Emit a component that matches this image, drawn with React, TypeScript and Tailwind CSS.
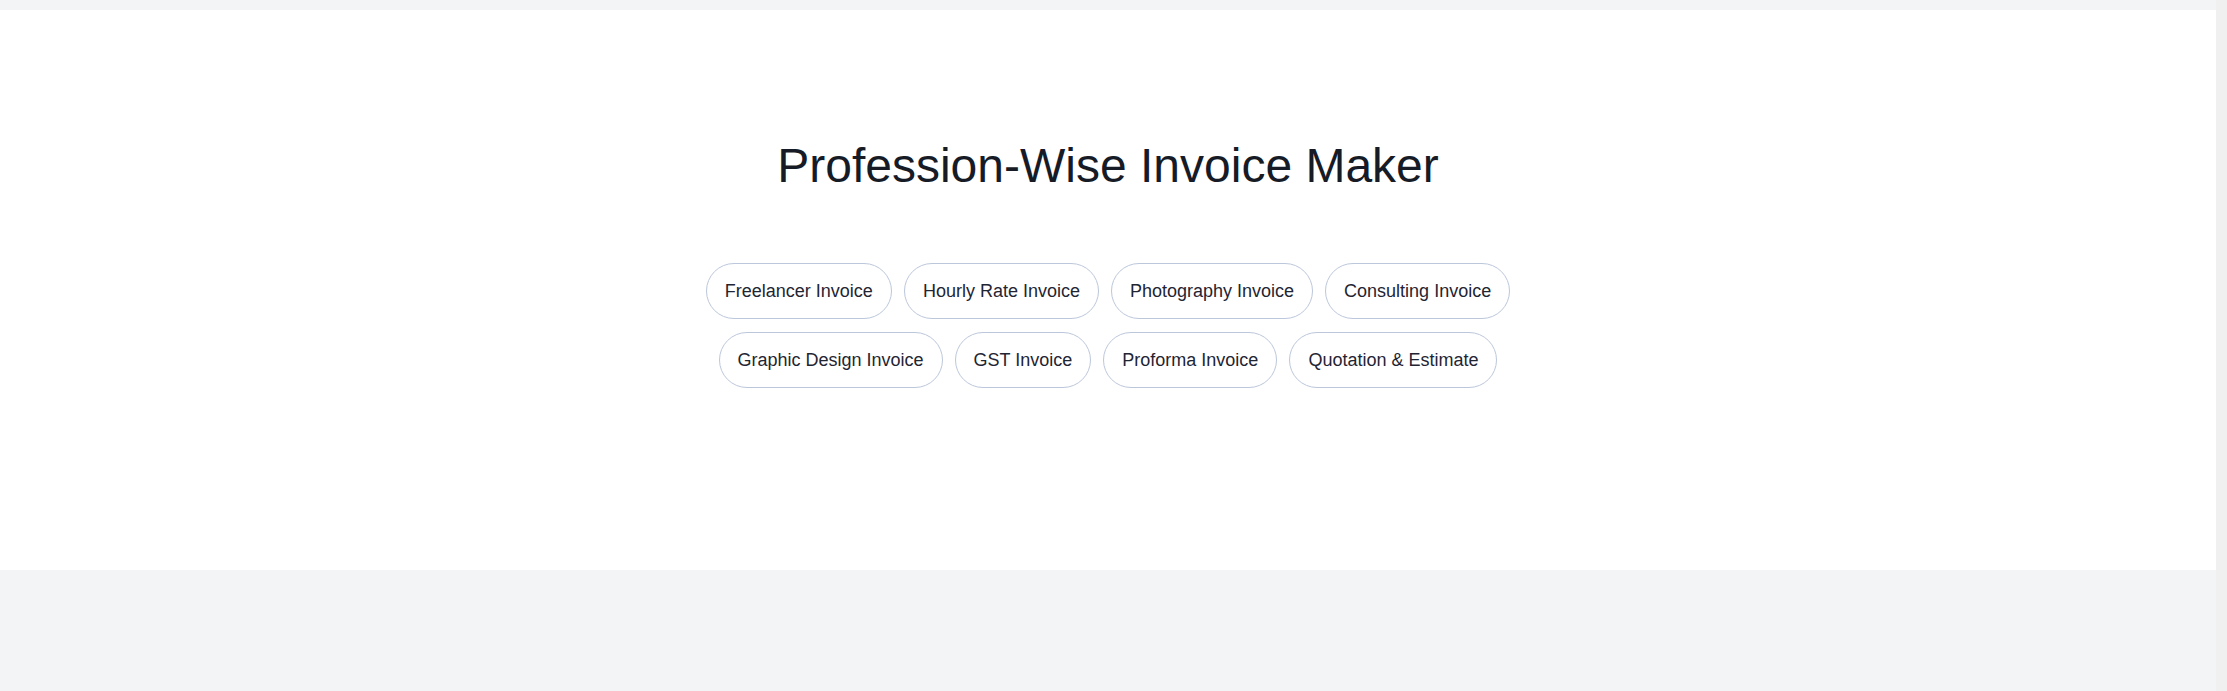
const professions = [
  "Freelancer Invoice",
  "Hourly Rate Invoice",
  "Photography Invoice",
  "Consulting Invoice",
  "Graphic Design Invoice",
  "GST Invoice",
  "Proforma Invoice",
  "Quotation & Estimate",
];

export default function App() {
  return (
    <div className="flex min-h-screen w-full bg-gray-100 font-['Liberation_Sans',Arial,sans-serif]">
      <div className="flex-1">
        <div className="h-[10px] bg-gray-100" />
        <section className="bg-white pt-[127px] pb-[182px]">
          <h1 className="text-center text-[48px] leading-[58px] font-normal text-[#161b26]">
            Profession-Wise Invoice Maker
          </h1>
          <div className="mx-auto mt-[68px] flex max-w-4xl flex-wrap justify-center gap-x-3 gap-y-[13px]">
            {professions.map((p) => (
              <a
                key={p}
                href="#"
                className="rounded-full border border-[#bcc7db] bg-white px-[18px] py-[13px] text-[18px] leading-[28px] text-[#1f2533] hover:border-[#93a3c4] transition-colors"
              >
                {p}
              </a>
            ))}
          </div>
        </section>
      </div>
      <div className="w-[11px] shrink-0 bg-[#f0f0f0]" />
    </div>
  );
}
